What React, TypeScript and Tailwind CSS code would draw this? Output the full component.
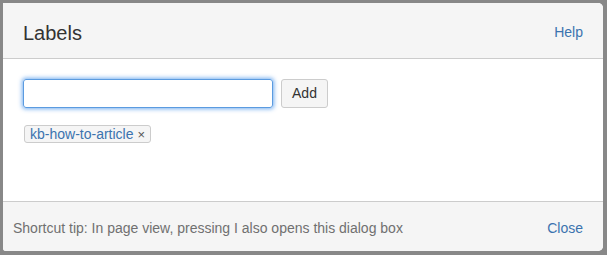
export default function App() {
  return (
    <div
      className="w-[607px] h-[255px] bg-[#888888] pt-[3px] pl-[3px] pr-[4px] pb-[4px]"
      style={{ fontFamily: '"Liberation Sans", Arial, sans-serif' }}
    >
      <div className="h-full flex flex-col bg-white rounded-r-[5px] rounded-bl-[3px] overflow-hidden">
        {/* Header */}
        <div className="h-[56px] shrink-0 flex items-center justify-between pl-[20px] pr-[20px] pt-[4px] bg-[#f5f5f5] border-b border-[#cccccc]">
          <h1 className="text-[20px] text-[#333333] leading-none">Labels</h1>
          <a className="text-[14px] text-[#3b73af] cursor-pointer">Help</a>
        </div>

        {/* Body */}
        <div className="flex-1 px-[20px] pt-[20px]">
          <div className="flex items-center gap-[8px]">
            <input
              type="text"
              className="w-[250px] h-[29px] rounded-[3px] border border-[#5b9be0] outline-none shadow-[0_0_4px_1px_rgba(82,154,235,0.8)] px-2 text-[14px]"
            />
            <button className="h-[29px] w-[47px] rounded-[3px] border border-[#cccccc] bg-[#f5f5f5] text-[14px] text-[#333333]">
              Add
            </button>
          </div>
          <div className="mt-[17px] flex">
            <span className="ml-[1px] inline-flex items-center h-[18px] px-[5px] gap-[4px] rounded-[3px] border border-[#cccccc] bg-[#f5f5f5] text-[14px] leading-none">
              <span className="text-[#3b73af]">kb-how-to-article</span>
              <span className="text-[#555555] text-[13px]">×</span>
            </span>
          </div>
        </div>

        {/* Footer */}
        <div className="h-[50px] shrink-0 flex items-center justify-between pl-[10px] pr-[20px] pt-[4px] bg-[#f5f5f5] border-t border-[#cccccc]">
          <span className="text-[14px] text-[#707070]">Shortcut tip: In page view, pressing I also opens this dialog box</span>
          <a className="text-[14px] text-[#3b73af] cursor-pointer">Close</a>
        </div>
      </div>
    </div>
  );
}
